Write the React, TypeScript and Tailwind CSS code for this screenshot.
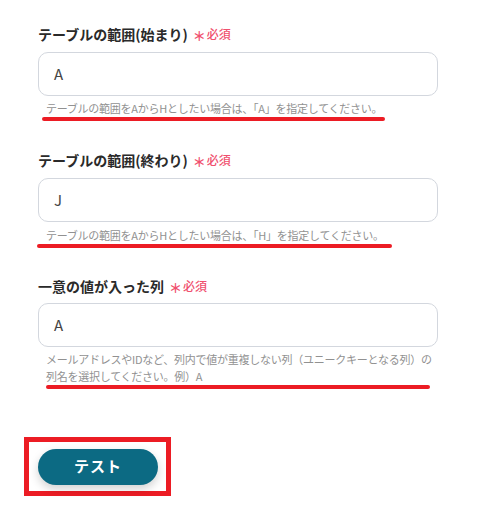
import React from "react";

const font = { fontFamily: '"Noto Sans CJK JP", "Noto Sans", sans-serif' };

function Label({ text }: { text: string }) {
  return (
    <div className="flex items-center h-[20px] leading-[20px]">
      <span className="text-[14px] font-bold text-[#2a2a2a]">{text}</span>
      <span className="ml-[5px] text-[13px] font-bold text-[#f0506e] leading-[20px] mt-[3px]">＊</span>
      <span className="ml-[1px] text-[12px] font-medium text-[#f0506e]">必須</span>
    </div>
  );
}

function Input({ value }: { value: string }) {
  return (
    <div className="w-[400px] h-[44px] rounded-[10px] border border-[#d3d7de] bg-white flex items-center pl-[15px] text-[15px] text-[#444]">
      {value}
    </div>
  );
}

const helper = "text-[11px] text-[#919191] tracking-[-0.25px]";

export default function App() {
  return (
    <div className="w-[490px] h-[509px] bg-white relative" style={font}>
      <div className="flex flex-col pl-[38px] pt-[24px]">
        <Label text="テーブルの範囲(始まり)" />
        <div className="mt-[8px]">
          <Input value="A" />
        </div>
        <div className={`mt-[4px] ml-[8px] leading-[16px] ${helper}`}>
          テーブルの範囲をAからHとしたい場合は、「A」を指定してください。
        </div>
        <div className="mt-[1px] ml-[4px] w-[343px] h-[4px] rounded-full bg-[#ec1c24]" />

        <div className="mt-[29px]">
          <Label text="テーブルの範囲(終わり)" />
        </div>
        <div className="mt-[8px]">
          <Input value="J" />
        </div>
        <div className={`mt-[5px] ml-[8px] leading-[16px] ${helper}`}>
          テーブルの範囲をAからHとしたい場合は、「H」を指定してください。
        </div>
        <div className="mt-[1px] ml-[-1px] w-[355px] h-[4px] rounded-full bg-[#ec1c24]" />

        <div className="mt-[28px]">
          <Label text="一意の値が入った列" />
        </div>
        <div className="mt-[7px]">
          <Input value="A" />
        </div>
        <div className={`mt-[4px] ml-[8px] leading-[17px] ${helper}`}>
          メールアドレスやIDなど、列内で値が重複しない列（ユニークキーとなる列）の
          <br />
          列名を選択してください。例）A
        </div>
        <div className="mt-[0px] ml-[8px] w-[384px] h-[4px] rounded-full bg-[#ec1c24]" />

        <div className="mt-[48px] ml-[-14px] w-[147px] h-[59px] border-[5px] border-[#ec1c24] flex items-center pl-[9px]">
          <button className="w-[120px] h-[36px] rounded-full bg-[#0c6a83] text-white text-[15px] font-bold shadow-[0_4px_10px_rgba(0,0,0,0.18)] tracking-[1px]">
            テスト
          </button>
        </div>
      </div>
    </div>
  );
}
